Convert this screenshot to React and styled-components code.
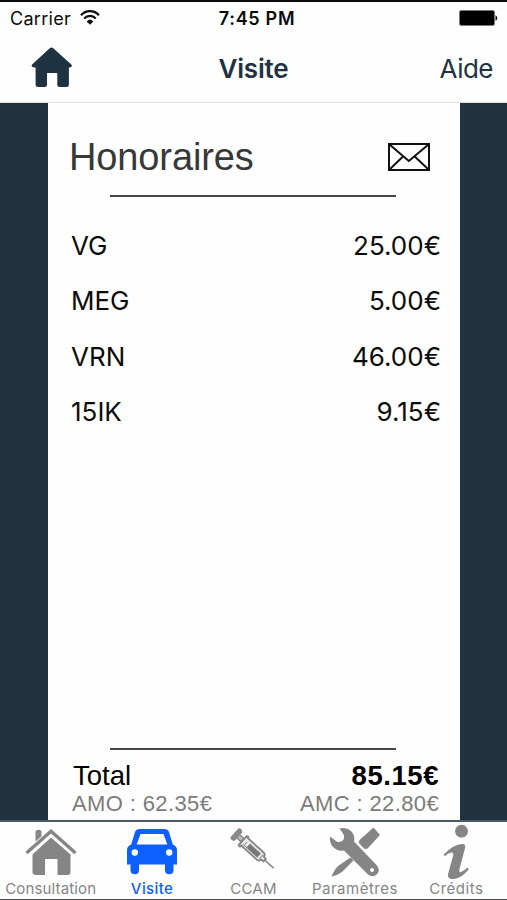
import React, { useState } from 'react';
import styled, { createGlobalStyle } from 'styled-components';

const GlobalStyle = createGlobalStyle`
  * {
    box-sizing: border-box;
  }
  body {
    margin: 0;
    background: #fefefe;
  }
`;

const Screen = styled.div`
  display: flex;
  flex-direction: column;
  height: 900px;
  width: 507px;
  overflow: hidden;
  font-family: Inter, 'Liberation Sans', sans-serif;
  color: #0b0b0b;
  background: #fefefe;
  border-top: 2px solid #0a0a0a;
  border-bottom: 1px solid #4c4c4c;
`;

const StatusBar = styled.div`
  display: grid;
  grid-template-columns: 1fr auto 1fr;
  align-items: center;
  height: 33px;
  padding: 0 9px 0 10px;
  font-size: 18px;
  line-height: 33px;
`;

const Carrier = styled.div`
  display: flex;
  align-items: center;
  gap: 9px;
  letter-spacing: 0.3px;

  svg {
    margin-bottom: 2px;
  }
`;

const Clock = styled.div`
  margin-left: 6px;
  font-weight: 600;
  letter-spacing: 0.7px;
`;

const Battery = styled.svg`
  justify-self: end;
  margin-bottom: 1px;
`;

const NavBar = styled.header`
  display: grid;
  grid-template-columns: 1fr auto 1fr;
  align-items: center;
  height: 68px;
  padding: 0 14px;
  border-bottom: 1px solid #dedede;
  color: #1f3242;
`;

const IconButton = styled.button`
  display: flex;
  padding: 0;
  border: none;
  background: none;
  color: inherit;
  cursor: pointer;
`;

const HomeButton = styled(IconButton)`
  margin: 0 0 3px 17px;
`;

const Title = styled.h1`
  margin: 0;
  font-size: 26px;
  font-weight: 600;
  letter-spacing: -0.2px;
  line-height: 32px;
`;

const HelpButton = styled.button`
  justify-self: end;
  padding: 0;
  border: none;
  background: none;
  color: inherit;
  font-family: inherit;
  font-size: 26px;
  letter-spacing: -0.5px;
  line-height: 32px;
  cursor: pointer;
`;

const Content = styled.main`
  flex: 1;
  display: flex;
  padding: 0 47px 0 48px;
  background: #20313f;
`;

const Sheet = styled.section`
  flex: 1;
  display: flex;
  flex-direction: column;
  background: #fefefe;
`;

const SheetHeader = styled.div`
  display: flex;
  align-items: center;
  justify-content: space-between;
  height: 92px;
  padding: 15px 30px 0 21px;
`;

const SheetTitle = styled.h2`
  margin: 0;
  font-family: 'Liberation Sans', Arial, sans-serif;
  font-size: 38px;
  font-weight: 400;
  letter-spacing: -0.12px;
  line-height: 46px;
  color: #383838;
`;

const Rule = styled.hr`
  width: 286px;
  height: 2px;
  margin: 0 0 0 62px;
  border: none;
  background: #474747;
`;

const FeeList = styled.ul`
  flex: 1;
  margin: 0;
  padding: 21px 19px 0 23px;
  list-style: none;
`;

const FeeRow = styled.li`
  display: flex;
  align-items: center;
  justify-content: space-between;
  height: 55.3px;
  font-size: 26px;
`;

const Totals = styled.div`
  padding: 12px 21px 2px 24px;
  font-family: 'Liberation Sans', Arial, sans-serif;
`;

const TotalRow = styled.div`
  display: flex;
  justify-content: space-between;
  height: 28px;
  padding-left: 1px;
  font-size: 27.5px;
  line-height: 28px;
  color: #000;
`;

const Amount = styled.strong`
  letter-spacing: 0.55px;
`;

const ShareRow = styled(TotalRow)`
  padding-left: 0;
  font-size: 22px;
  letter-spacing: 0.38px;
  color: #7b7b7b;
`;

const TabBar = styled.nav`
  display: grid;
  grid-template-columns: repeat(5, 1fr);
  height: 79px;
  border-top: 2px solid #4f5b64;
`;

const Tab = styled.button`
  display: flex;
  flex-direction: column;
  align-items: center;
  min-width: 0;
  padding: 0;
  border: none;
  background: none;
  font-family: inherit;
  font-size: 15px;
  font-weight: ${({ $active }) => ($active ? 500 : 400)};
  letter-spacing: ${({ $spacing }) => $spacing}px;
  line-height: 20px;
  white-space: nowrap;
  color: ${({ $active }) => ($active ? '#0b60fe' : '#858585')};
  cursor: pointer;
`;

const TabIcon = styled.svg`
  display: block;
  flex: none;
  width: 60px;
  height: 57px;
`;

const WifiIcon = () => (
  <svg width="20" height="15" viewBox="0 0 20 15" fill="none" stroke="#0b0b0b" strokeWidth="2.2">
    <path d="M1 5.2C6-.2 14-.2 19 5.2" />
    <path d="M4.2 8.6c3.400-3.600 8.200-3.600 11.600 0" />
    <path d="M6.700 11.400c2-2.200 4.600-2.200 6.600 0L10 14.800z" fill="#0b0b0b" stroke="none" />
  </svg>
);

const BatteryIcon = () => (
  <Battery width="39" height="16" viewBox="0 0 39 16">
    <rect x="0.5" y="0.5" width="35" height="15" rx="1.8" fill="#000" stroke="#777" />
    <path d="M36.5 5.2c2.3.8 2.3 4.8 0 5.6z" fill="#111" />
  </Battery>
);

const HomeIcon = () => (
  <svg width="41" height="41" viewBox="0 0 41 41" fill="currentColor">
    <path d="M19 1.100q1.500-1.200 3 0L40.300 17.600q1 1.200 0 2.200-.8.9-2.400.6V37.500q0 2.500-2.500 2.500h-6.600q-2.500 0-2.500-2.500V26H16v11.500q0 2.500-2.500 2.500H7.100q-2.500 0-2.500-2.500V20.400q-2.400.3-3.500-.6-1-1 0-2.200z" />
  </svg>
);

const MailIcon = () => (
  <svg width="42" height="28" viewBox="0 0 42 28" fill="none" stroke="#111" strokeWidth="2">
    <path d="M1 1h40v26H1z" />
    <path d="M1.500 1.500 20.800 18 40.500 1.500M1.500 26.500 15 13.500M40.500 26.500 26.700 13.500" />
  </svg>
);

const tabs = [
  {
    id: 'consultation',
    label: 'Consultation',
    spacing: 0.15,
    icon: (
      <>
        <path d="M5.500 31 30 9.200 54.500 31" fill="none" stroke="currentColor" strokeWidth="3.400" />
        <path d="M14.500 19.500v-9q0-2.800 3-2.800t3 2.800v3.800z" fill="currentColor" />
        <path d="M30 15.500 49.500 32.500V50q0 3-3 3h-10V37H24v16h-9q-3.500 0-3.500-3V32.500z" fill="currentColor" />
      </>
    ),
  },
  {
    id: 'visite',
    label: 'Visite',
    spacing: 0.4,
    icon: (
      <>
        <path
          fill="currentColor"
          fillRule="evenodd"
          d="M18 7h24q4 0 5 3l3.800 12.500Q55 24 55 28v14.500h-3.500V48q0 4.300-4.200 4.300T43 48v-5.500H17V48q0 4.300-4.200 4.300T8.500 48v-5.500H5V28q0-4 4.200-5.500L13 10q1-3 5-3zM18.500 12 14.700 22.500h30.600L41.500 12z"
        />
        <circle cx="12.800" cy="30.500" r="3.200" fill="#fefefe" />
        <circle cx="47.200" cy="30.500" r="3.200" fill="#fefefe" />
      </>
    ),
  },
  {
    id: 'ccam',
    label: 'CCAM',
    spacing: 0.2,
    icon: (
      <g transform="translate(13.300 12.500) rotate(42) scale(.93 .9)" fill="none" stroke="currentColor">
        <path d="M-2-6.500q3-2 4.500 1v11q-1.500 3-4.500 1z" fill="#8a8a8a" strokeWidth="1.500" />
        <path d="M2.500-2.500H9v5H2.500z" fill="#bbb" strokeWidth="1.500" />
        <path d="M9.500-6.500Q12-8 12-5.500h22q4 0 4 3.500h3v4h-3q0 3.500-4 3.500H12q0 3-2.500 1.500z" fill="#eee" strokeWidth="2" />
        <path d="M18-2.200h15v5.400H18z" fill="#777" strokeWidth="1" />
        <path d="M12 3h6M14-2v4M36-3v6" strokeWidth="1" />
        <path d="M41 0h13" strokeWidth="1.700" />
      </g>
    ),
  },
  {
    id: 'parametres',
    label: 'Paramètres',
    spacing: 0.5,
    icon: (
      <>
        <path d="M48.500 5.500 55 13 43 26q-2.200 2.200-4.500 0l-4-4.200q-1.700-2 .3-4z" fill="currentColor" />
        <path d="m25.500 35.500 3 3L17 50q-4.500 3.500-10.500 4.500Q9.500 47.500 13 44z" fill="currentColor" />
        <path
          fill="currentColor"
          fillRule="evenodd"
          d="M14.500 6.500q7-2 11.500 2.500 4.500 4.500 3 10.500L51.500 43q4.500 5 .5 9.300-4.500 4.200-9.500-.3L19 28.500q-6.500 1-11-3.500-4-4.500-3-10.500l7 5.200q4 .8 6-1.500 2.200-3 .3-6.200zM47 46a2 2 0 1 0 .1 0z"
        />
      </>
    ),
  },
  {
    id: 'credits',
    label: 'Crédits',
    spacing: 0.5,
    icon: (
      <>
        <circle cx="35.500" cy="9.200" r="6.400" fill="currentColor" />
        <path
          fill="currentColor"
          d="M17.700 32.500Q27 22.500 36.500 22q3.500.2 2.500 4.200L33.500 47q-.7 4 1.500 3 3.500-1.500 6.500-4.500l1.300 1.800Q35.500 56.500 27 57.200q-6-.2-4.800-5.700l5.100-18.500q.4-3-2-2.500-3.500.8-6.500 3.800z"
        />
      </>
    ),
  },
];

const fees = [
  { code: 'VG', price: '25.00€' },
  { code: 'MEG', price: '5.00€' },
  { code: 'VRN', price: '46.00€' },
  { code: '15IK', price: '9.15€' },
];

const App = () => {
  const [activeTab, setActiveTab] = useState('visite');

  return (
    <>
      <GlobalStyle />
      <Screen>
        <StatusBar>
          <Carrier>
            Carrier
            <WifiIcon />
          </Carrier>
          <Clock>7:45 PM</Clock>
          <BatteryIcon />
        </StatusBar>
        <NavBar>
          <HomeButton type="button">
            <HomeIcon />
          </HomeButton>
          <Title>Visite</Title>
          <HelpButton type="button">Aide</HelpButton>
        </NavBar>
        <Content>
          <Sheet>
            <SheetHeader>
              <SheetTitle>Honoraires</SheetTitle>
              <IconButton type="button">
                <MailIcon />
              </IconButton>
            </SheetHeader>
            <Rule />
            <FeeList>
              {fees.map((fee) => (
                <FeeRow key={fee.code}>
                  <span>{fee.code}</span>
                  <span>{fee.price}</span>
                </FeeRow>
              ))}
            </FeeList>
            <Rule />
            <Totals>
              <TotalRow>
                <span>Total</span>
                <Amount>85.15€</Amount>
              </TotalRow>
              <ShareRow>
                <span>AMO : 62.35€</span>
                <span>AMC : 22.80€</span>
              </ShareRow>
            </Totals>
          </Sheet>
        </Content>
        <TabBar>
          {tabs.map((tab) => (
            <Tab
              key={tab.id}
              type="button"
              $active={tab.id === activeTab}
              $spacing={tab.spacing}
              onClick={() => setActiveTab(tab.id)}
            >
              <TabIcon viewBox="0 0 60 57">{tab.icon}</TabIcon>
              {tab.label}
            </Tab>
          ))}
        </TabBar>
      </Screen>
    </>
  );
};

export default App;
